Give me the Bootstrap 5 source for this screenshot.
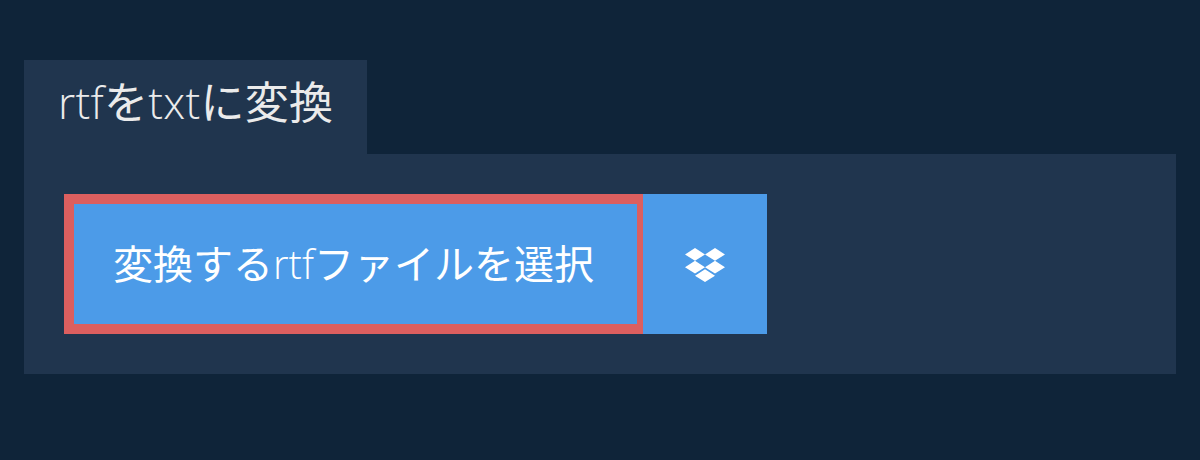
<!DOCTYPE html>
<html lang="ja"><head><meta charset="utf-8">
<link href="https://cdn.jsdelivr.net/npm/bootstrap@5.3.0/dist/css/bootstrap.min.css" rel="stylesheet">
<style>
html,body{height:100%}
body{background:#0f2439;font-family:"Open Sans","Noto Sans CJK JP",sans-serif;}
.wrap{padding:60px 24px 0}
.tabhead{background:#20354e;color:#ebebeb;font-size:44px;font-weight:300;line-height:84px;height:94px;width:343px;padding-left:34px;letter-spacing:.3px;white-space:nowrap}
.tabhead .kanji{font-weight:400}
.panel{background:#20354e;padding:40px;height:220px}
.pick{background:#4c9be8;color:#fff;border:10px solid #dc5f5f;border-right-width:6px;border-radius:0;width:579px;height:140px;font-size:40px;font-weight:400;padding:0 4px 0 0;white-space:nowrap}
.pick .latin{font-weight:300}
.drop{background:#4c9be8;width:124px;height:140px;border:0;border-radius:0;padding:0}
.drop svg{margin-top:2px}
</style></head><body>
<div class="wrap">
<div class="tabhead">rtf<span class="kanji">を</span>txt<span class="kanji">に変換</span></div>
<div class="panel"><div class="d-flex">
<button class="btn pick">変換する<span class="latin">rtf</span>ファイルを選択</button>
<button class="btn drop d-flex align-items-center justify-content-center" aria-label="Dropbox"><svg width="40" height="34" viewBox="0 0 40 34" fill="#fff"><path d="M10 0 0 6.4l10 6.4 10-6.4zM30 0 20 6.4l10 6.4 10-6.4zM0 19.2l10 6.4 10-6.4-10-6.4zM30 12.8l-10 6.4 10 6.4 10-6.4zM10 27.7 20 34l10-6.3-10-6.4z"/></svg></button>
</div></div>
</div>
<script src="https://cdn.jsdelivr.net/npm/bootstrap@5.3.0/dist/js/bootstrap.bundle.min.js"></script>
</body></html>
